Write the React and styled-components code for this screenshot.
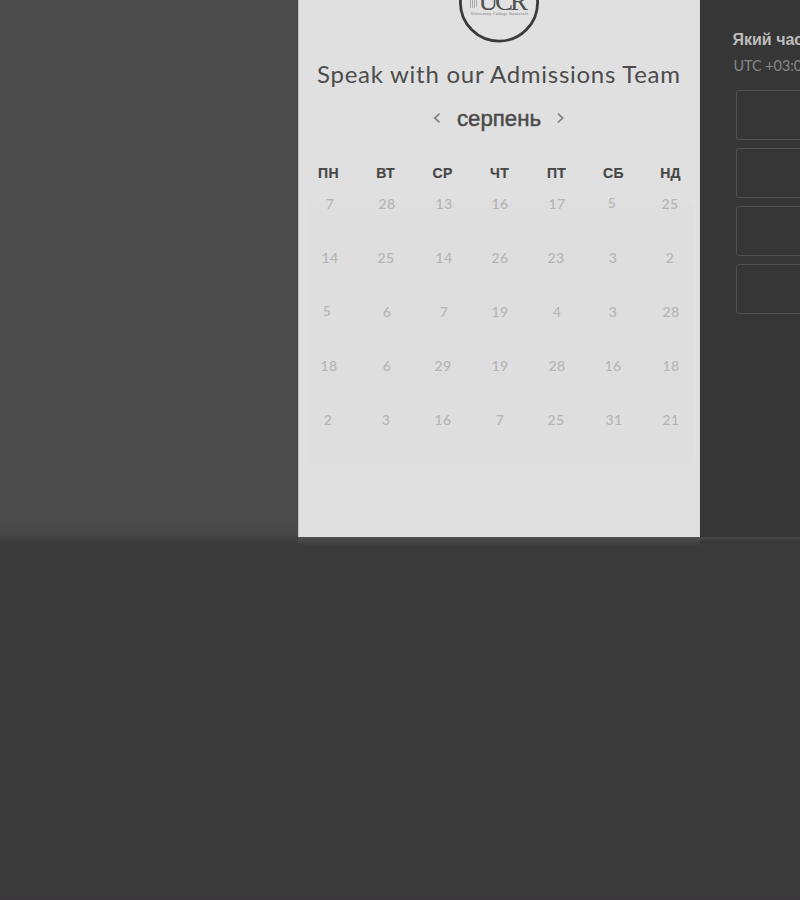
import React from "react";
import styled, { createGlobalStyle } from "styled-components";

const GlobalStyle = createGlobalStyle`
  *, *::before, *::after { box-sizing: border-box; }
  body { margin: 0; overflow: hidden; background: #3a3a3a; }
`;

const Page = styled.div`
  display: flex;
  flex-direction: column;
  width: 800px;
  height: 900px;
  overflow: hidden;
  background: #3a3a3a;
  border-bottom: 1px solid #3d363a;
  font-family: "Liberation Sans", Arial, sans-serif;
`;

const Scheduler = styled.main`
  display: flex;
  flex: none;
  height: 537px;
`;

const Backdrop = styled.div`
  flex: none;
  width: 298px;
  background: linear-gradient(#4b4b4b 0, #4b4b4b 522px, #464646 534px, #434343 537px);
`;

const CalendarPanel = styled.section`
  display: flex;
  flex-direction: column;
  flex: none;
  width: 402px;
  background: #e0e0e0;
  border-left: 1px solid #c2c2c2;
  border-right: 1px solid #d9d9d9;
`;

const Logo = styled.svg`
  display: block;
  flex: none;
  width: 84px;
  height: 45px;
  margin-left: 158px;
`;

const Title = styled.h1`
  margin: 13px 0 0 18px;
  height: 32px;
  line-height: 32px;
  font-family: Lato, sans-serif;
  font-size: 24px;
  font-weight: 400;
  letter-spacing: 0.73px;
  white-space: nowrap;
  color: #4c4c4c;
`;

const MonthNav = styled.nav`
  display: flex;
  align-items: center;
  height: 30px;
  margin: 14px 0 0 131px;
`;

const ArrowButton = styled.button`
  display: flex;
  width: 14px;
  height: 16px;
  margin-bottom: 2px;
  padding: 3px;
  border: 0;
  background: none;
  color: #858585;
`;

const Month = styled.h2`
  width: 87px;
  margin: 0 10px 0 13px;
  font-size: 22.2px;
  line-height: 30px;
  font-weight: 400;
  -webkit-text-stroke: 0.5px #4b4b4b;
  white-space: nowrap;
  color: #4b4b4b;
`;

const Week = styled.div`
  display: grid;
  grid-template-columns: repeat(7, 57px);
  height: 24px;
  margin: 27px 0 0 1px;
`;

const Weekday = styled.span`
  text-align: center;
  font-size: 14px;
  line-height: 24px;
  font-weight: 700;
  letter-spacing: 0.3px;
  -webkit-text-stroke: 0.2px #474747;
  color: #474747;
`;

const Days = styled.div`
  display: grid;
  grid-template-columns: repeat(7, 57px);
  grid-template-rows: repeat(5, 54px);
  width: 385px;
  height: 261px;
  margin: 17px 0 0 9px;
  background: #dedede;
`;

const Day = styled.span`
  width: 57px;
  height: 24px;
  margin: ${({ $dy }) => -10 + $dy}px 0 0 ${({ $dx }) => -8.5 + $dx}px;
  text-align: center;
  font-family: Lato, sans-serif;
  font-size: 14px;
  font-weight: 500;
  letter-spacing: 0.5px;
  line-height: 24px;
  color: #b5b5b5;
`;

const TimePanel = styled.aside`
  flex: 1;
  min-width: 0;
  padding: 29px 0 0 32.5px;
  overflow: hidden;
  background: #363636;
`;

const Question = styled.h3`
  margin: 0;
  font-size: 16px;
  line-height: 22px;
  font-weight: 700;
  white-space: nowrap;
  color: #bdbdbd;
`;

const Timezone = styled.p`
  margin: 3px 0 0 1px;
  font-family: Lato, sans-serif;
  font-size: 14.5px;
  line-height: 24px;
  letter-spacing: -0.1px;
  white-space: nowrap;
  color: #878787;
`;

const Slots = styled.div`
  display: grid;
  gap: 8px;
  margin: 12px 0 0 3.5px;
`;

const Slot = styled.button`
  width: 180px;
  height: 50px;
  border: 1px solid #505050;
  border-radius: 3px;
  background: #363636;
`;

const Shade = styled.div`
  flex: none;
  width: ${({ $w }) => $w}px;
  height: ${({ $h }) => $h}px;
  background: linear-gradient(${({ $from }) => $from}, #3a3a3a);
`;

const LowerEdge = styled.div`
  display: flex;
`;

const weekdays = ["ПН", "ВТ", "СР", "ЧТ", "ПТ", "СБ", "НД"];

// Each entry: day number, horizontal and vertical optical offsets.
const days = [
  [7, 2], [28, 2], [13, 2], [16, 1], [17, 1], [5, -1, -1], [25, 0],
  [14, 2], [25, 1], [14, 2], [26, 1], [23, 0], [3, 0], [2, 0],
  [5, -1, -1], [6, 2], [7, 2], [19, 1], [4, 1], [3, 0], [28, 1],
  [18, 1], [6, 2], [29, 1], [19, 1], [28, 1], [16, 0], [18, 1],
  [2, 0], [3, 1], [16, 1], [7, 1], [25, 0], [31, 1], [21, 1],
];

function Chevron({ next }) {
  return (
    <svg width="8" height="10" viewBox="0 0 8 10" fill="none" stroke="currentColor" strokeWidth="1.7">
      <path d={next ? "M1 .7 5.8 5 1 9.3" : "M6.5 .7 1.7 5 6.5 9.3"} />
    </svg>
  );
}

function UniversityLogo() {
  return (
    <Logo viewBox="457 0 84 45">
      <circle cx="499" cy="2.5" r="38.6" fill="#e2e2e2" stroke="#3b3b3b" strokeWidth="2.8" />
      <path d="M470.5 0v8M472.5 0v8M474.5 0v8M476.5 0v7" stroke="#aaa" strokeWidth="1" />
      <text x="478.5" y="9.5" fontFamily="Liberation Serif, serif" fontSize="27" textLength="49.5" lengthAdjust="spacing" fill="#505050">UCR</text>
      <text x="471" y="14.8" fontFamily="Liberation Serif, serif" fontSize="4.5" textLength="57" fill="#777">University College Roosevelt</text>
    </Logo>
  );
}

export default function App() {
  return (
    <>
      <GlobalStyle />
      <Page>
        <Scheduler>
          <Backdrop />
          <CalendarPanel>
            <UniversityLogo />
            <Title>Speak with our Admissions Team</Title>
            <MonthNav>
              <ArrowButton aria-label="Попередній місяць"><Chevron /></ArrowButton>
              <Month>серпень</Month>
              <ArrowButton aria-label="Наступний місяць"><Chevron next /></ArrowButton>
            </MonthNav>
            <Week>
              {weekdays.map((name) => <Weekday key={name}>{name}</Weekday>)}
            </Week>
            <Days>
              {days.map(([day, dx = 0, dy = 0], index) => (
                <Day key={index} $dx={dx} $dy={dy}>{day}</Day>
              ))}
            </Days>
          </CalendarPanel>
          <TimePanel>
            <Question>Який час</Question>
            <Timezone>UTC +03:00</Timezone>
            <Slots>
              <Slot /><Slot /><Slot /><Slot />
            </Slots>
          </TimePanel>
        </Scheduler>
        <LowerEdge>
          <Shade $w={298} $h={8} $from="#424242" />
          <Shade $w={402} $h={9} $from="#505050" />
          <Shade $w={100} $h={4} $from="#4a4a4a" />
        </LowerEdge>
      </Page>
    </>
  );
}
